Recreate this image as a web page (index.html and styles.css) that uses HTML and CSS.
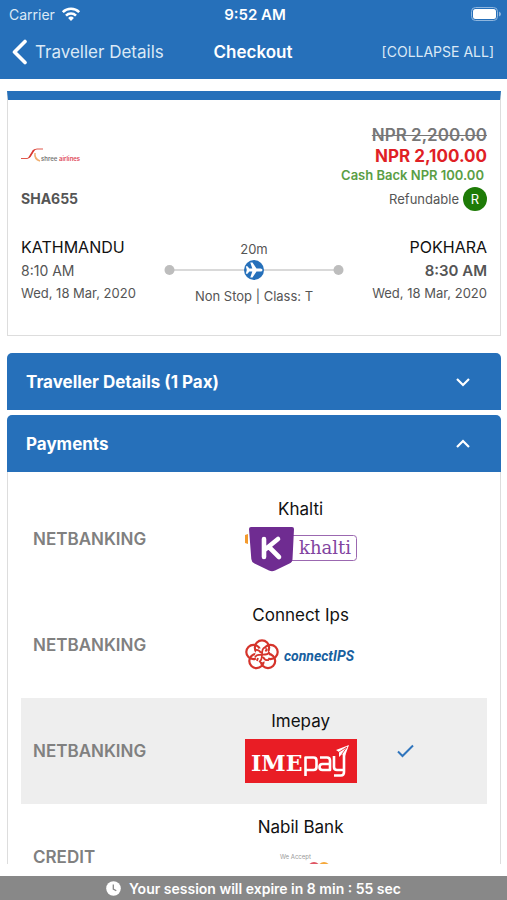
FILE: index.html
```html
<!DOCTYPE html>
<html lang="en">
<head>
  <meta charset="UTF-8">
  <meta name="viewport" content="width=device-width, initial-scale=1">
  <title>Checkout</title>
  <link rel="stylesheet" href="styles.css">
</head>
<body>

  <header>
    <!-- Status bar -->
    <div class="status-bar">
      <span class="carrier">Carrier
        <svg width="20" height="16" viewBox="0 0 20 16" fill="none" stroke="#fff" stroke-width="2.6">
          <path d="M1.8 6.2a11.6 11.6 0 0 1 16.4 0"/>
          <path d="M5 9.6a7.1 7.1 0 0 1 10 0"/>
          <path d="M10 15l-2.9-3.1a4.2 4.2 0 0 1 5.8 0z" fill="#fff" stroke="none"/>
        </svg>
      </span>
      <span class="time">9:52 AM</span>
      <svg class="battery" width="30" height="14" viewBox="0 0 30 14">
        <rect x="0.5" y="0.5" width="26" height="13" rx="4" fill="none" stroke="#8fb6de"/>
        <rect x="2" y="2" width="23" height="10" rx="2.5" fill="#fff"/>
        <path d="M28 4.5v5q2-1 2-2.5t-2-2.5z" fill="#8fb6de"/>
      </svg>
    </div>

    <!-- Navigation -->
    <nav>
      <a class="back" href="#">
        <svg width="16" height="26" viewBox="0 0 16 26" fill="none" stroke="#fff" stroke-width="3.6" stroke-linecap="round" stroke-linejoin="round"><path d="M13 2.5L2.5 13L13 23.5"/></svg>
        Traveller Details
      </a>
      <h1>Checkout</h1>
      <button class="collapse" type="button">[COLLAPSE ALL]</button>
    </nav>
  </header>

  <main>
    <!-- Flight -->
    <section class="flight">
      <div class="summary">
        <div class="airline">
          <svg width="62" height="20" viewBox="0 0 62 20">
            <path d="M0 13.5h6q2 0 3-2l3-5q1.500-2.500 4-2.500h6" fill="none" stroke="#e0584c" stroke-width="1"/>
            <path d="M7 13l4.500-7.500q1-1.500 3-1.500l-5 8q-.7 1-2.500 1z" fill="#d93a32"/>
            <path d="M14 8q-1 6 5 8" fill="none" stroke="#f0b070" stroke-width="1.5"/>
            <text x="20" y="16" fill="#777">shree</text>
            <text x="38" y="16" fill="#e04858">airlines</text>
          </svg>
          <strong>SHA655</strong>
        </div>
        <div class="price">
          <del>NPR 2,200.00</del>
          <strong class="now">NPR 2,100.00</strong>
          <strong class="cashback">Cash Back NPR 100.00</strong>
          <span class="refund">Refundable <b>R</b></span>
        </div>
      </div>

      <div class="route">
        <div class="stop">
          <h2>KATHMANDU</h2>
          <span class="hour">8:10 AM</span>
          <span class="date">Wed, 18 Mar, 2020</span>
        </div>
        <div class="leg">
          <span>20m</span>
          <svg width="180" height="22" viewBox="0 0 180 22">
            <path d="M5 11h170" stroke="#ccc" stroke-width="1.5"/>
            <circle cx="5.5" cy="11" r="5" fill="#bdbdbd"/>
            <circle cx="174.5" cy="11" r="5" fill="#bdbdbd"/>
            <circle cx="90" cy="11" r="10" fill="#2670ba"/>
            <path d="M98.500 11q0-1.600-2-1.600h-4L88.500 3.500h-2.200l2 5.900h-3L83.500 7.200H81.800l1 3.800-1 3.800h1.700l1.800-2.200h3l-2 5.900h2.200l4-5.900h4q2 0 2-1.600z" fill="#fff"/>
          </svg>
          <span class="class">Non Stop | Class: T</span>
        </div>
        <div class="stop arrive">
          <h2>POKHARA</h2>
          <span class="hour">8:30 AM</span>
          <span class="date">Wed, 18 Mar, 2020</span>
        </div>
      </div>
    </section>

    <!-- Accordions -->
    <button class="bar" type="button" aria-expanded="false">
      Traveller Details (1 Pax)
      <svg width="14" height="10" viewBox="0 0 14 10" fill="none" stroke="#fff" stroke-width="2.2"><path d="M1 2l6 6 6-6"/></svg>
    </button>
    <button class="bar" type="button" aria-expanded="true">
      Payments
      <svg width="14" height="10" viewBox="0 0 14 10" fill="none" stroke="#fff" stroke-width="2.2"><path d="M1 8l6-6 6 6"/></svg>
    </button>

    <div class="payments">
      <label class="method">
        <input type="radio" name="method" value="khalti">
        <span class="type">NETBANKING</span>
        <span class="brand">Khalti
          <svg width="114" height="46" viewBox="0 0 114 46">
            <path d="M1 9l3-1v10l-3-1z" fill="#f39a2d"/>
            <rect x="40" y="9.5" width="72.500" height="25" rx="3" fill="#fff" stroke="#9b68b0"/>
            <path d="M7 1h41q2 0 2 2l-1.500 30q0 3-3 4.500L31 44.500q-3 1.500-6 0L10.500 37.500q-3-1.500-3.200-4.500L5 3q0-2 2-2z" fill="#6f2c91"/>
            <path d="M20 13v18M34 13L20.500 24M25 21l10 10" fill="none" stroke="#fff" stroke-width="4.6" stroke-linecap="round"/>
            <text class="khalti-text" x="55" y="28">khalti</text>
          </svg>
        </span>
      </label>

      <label class="method">
        <input type="radio" name="method" value="connectips">
        <span class="type">NETBANKING</span>
        <span class="brand">Connect Ips
          <svg width="114" height="46" viewBox="0 0 114 46">
            <g fill="none" stroke="#d5342b" stroke-width="2.2">
              <circle cx="18" cy="15.5" r="7.2"/>
              <circle cx="26.500" cy="20" r="7.2"/>
              <circle cx="24" cy="29" r="7.2"/>
              <circle cx="12.500" cy="29" r="7.2"/>
              <circle cx="9.500" cy="20" r="7.2"/>
            </g>
            <circle cx="18" cy="23" r="7" fill="#fff"/>
            <path d="M20.500 15.500q-2.500 1-2.500 7t-3 7.500M11 25.500q1-3 7-2.800t7.500-2.700M11 18q4-1 6 3M19 25q2 4 6 3M23 16.500l-1.500 3M13 29l1-3" fill="none" stroke="#d5342b" stroke-width="1.8"/>
            <text class="ips-text" x="40" y="29">connectIPS</text>
          </svg>
        </span>
      </label>

      <label class="method">
        <input type="radio" name="method" value="imepay" checked>
        <span class="type">NETBANKING</span>
        <span class="brand">Imepay
          <svg width="114" height="46" viewBox="0 0 114 46">
            <path d="M1 1h112v44H1z" fill="#e91d25"/>
            <text class="ime-text" x="7" y="33">IME</text>
            <g fill="none" stroke="#fff" stroke-width="2.6" stroke-linejoin="round">
              <path d="M61.500 38V19.500h8q3 0 3 3v6.500q0 3-3 3h-8"/>
              <path d="M76 19.500h7q3 0 3 3V32h-7.500q-3 0-3-3t3-3H86"/>
              <path d="M90 18v11q0 3 3 3h7M100 16v18q0 3.500-3 3.500h-7"/>
            </g>
            <path d="M92 12l13-5-4 11-3-2-3 3v-5z" fill="#fff"/>
            <path d="M95 14l8-5-5 7" fill="none" stroke="#e91d25" stroke-width=".8"/>
          </svg>
        </span>
        <svg class="tick" width="17" height="14" viewBox="0 0 17 14" fill="none" stroke="#2f75bd" stroke-width="2"><path d="M1 7.5l4.500 4.500L16 1.500"/></svg>
      </label>

      <label class="method">
        <input type="radio" name="method" value="nabil">
        <span class="type">CREDIT</span>
        <span class="brand">Nabil Bank
          <svg width="114" height="46" viewBox="0 0 114 46">
            <text class="accept-text" x="36" y="15">We Accept</text>
            <circle cx="70" cy="24" r="6" fill="#df5563"/>
            <circle cx="80" cy="24" r="6" fill="#f5a83a"/>
          </svg>
        </span>
      </label>
    </div>
  </main>

  <footer>
    <svg width="15" height="15" viewBox="0 0 15 15"><circle cx="7.5" cy="7.5" r="7.3" fill="#fff"/><path d="M7.300 3.500v4.500l3 1.700" fill="none" stroke="#888" stroke-width="1.3"/></svg>
    Your session will expire in 8 min : 55 sec
  </footer>

</body>
</html>
```

FILE: styles.css
```css
* {
  box-sizing: border-box;
}

body {
  margin: 0;
  height: 100vh;
  display: flex;
  flex-direction: column;
  background-color: #fff;
  color: #555;
  font-family: Inter, "Liberation Sans", sans-serif;
  font-size: 13px;
}

h1, h2 {
  margin: 0;
}

svg {
  display: block;
  flex: none;
}

button {
  border: none;
  font-family: inherit;
  color: #fff;
  cursor: pointer;
}

header {
  flex: none;
  background-color: #2670ba;
  color: #fff;
}

.status-bar, nav {
  display: grid;
  grid-template-columns: 1fr auto 1fr;
  align-items: center;
}

.status-bar {
  height: 28px;
  padding: 0 6px 0 9px;
  font-size: 14px;
}

.carrier {
  display: flex;
  align-items: center;
  gap: 6px;
  color: #dbe9f6;
}

.time {
  font-size: 15px;
  font-weight: 600;
}

.battery {
  justify-self: end;
}

nav {
  height: 51px;
  padding: 0 13px 4px 12px;
}

.back {
  display: flex;
  align-items: center;
  gap: 7px;
  color: #dbe9f6;
  font-size: 17px;
  text-decoration: none;
  white-space: nowrap;
}

h1 {
  font-size: 17px;
  font-weight: 600;
}

.collapse {
  justify-self: end;
  padding: 0;
  background: none;
  color: #dbe9f6;
  font-size: 14px;
}

main {
  flex: 1;
  min-height: 0;
  overflow: hidden;
  padding: 12px 6px 0 7px;
}

/* Flight card */
.flight {
  margin-bottom: 17px;
  padding: 25px 13px 29px;
  border: 1px solid #ddd;
  border-top: 9px solid #2670ba;
}

.summary {
  display: flex;
  justify-content: space-between;
}

.airline {
  display: flex;
  flex-direction: column;
  justify-content: space-between;
  padding: 20px 0 4px;
  font-size: 14px;
}

.airline text {
  font-size: 6px;
  font-weight: 600;
}

.price {
  display: flex;
  flex-direction: column;
  align-items: flex-end;
  line-height: 21px;
  font-size: 17px;
}

.price del {
  color: #777;
  font-weight: 600;
}

.now {
  color: #e01f26;
  font-weight: 700;
}

.cashback {
  padding-right: 3px;
  color: #5a9e45;
  font-size: 13px;
  font-weight: 600;
  line-height: 16px;
}

.refund {
  display: flex;
  align-items: center;
  gap: 4px;
  margin-top: 4px;
  font-size: 13px;
}

.refund b {
  width: 24px;
  border-radius: 50%;
  background-color: #1e7b07;
  color: #fff;
  font-weight: 400;
  line-height: 24px;
  text-align: center;
}

.route {
  display: grid;
  grid-template-columns: 1fr auto 1fr;
  margin-top: 24px;
  line-height: 20px;
}

.stop {
  display: flex;
  flex-direction: column;
}

.stop h2 {
  color: #111;
  font-size: 16px;
  font-weight: 400;
  line-height: 24px;
}

.hour {
  font-size: 14px;
  line-height: 24px;
}

.date {
  white-space: nowrap;
}

.arrive {
  align-items: flex-end;
}

.arrive .hour {
  font-size: 15px;
  font-weight: 600;
}

.leg {
  display: flex;
  flex-direction: column;
  align-items: center;
  padding-top: 4px;
}

.leg .class {
  margin-top: 5px;
}

/* Accordion bars */
.bar {
  display: flex;
  align-items: center;
  justify-content: space-between;
  width: 100%;
  height: 57px;
  margin-bottom: 5px;
  padding: 0 31px 0 19px;
  border-radius: 5px 5px 0 0;
  background-color: #2670ba;
  font-size: 17px;
  font-weight: 700;
}

.bar[aria-expanded="true"] {
  margin-bottom: 0;
}

.payments {
  padding: 14px 13px 0;
  border: 1px solid #ddd;
  border-top: none;
}

.method {
  display: grid;
  grid-template-columns: 2fr 2fr 1fr;
  align-items: center;
  height: 106px;
  cursor: pointer;
}

.method input {
  position: absolute;
  opacity: 0;
}

.method:has(input:checked) {
  background-color: #eee;
}

.type {
  padding-left: 12px;
  color: #808080;
  font-size: 17px;
  font-weight: 600;
}

.brand {
  display: flex;
  flex-direction: column;
  align-items: center;
  gap: 5px;
  padding-bottom: 9px;
  color: #111;
  font-size: 17px;
  line-height: 24px;
}

.tick {
  margin-left: 3px;
}

.khalti-text {
  fill: #8244a0;
  font-family: "DejaVu Serif", serif;
  font-size: 18px;
}

.ips-text {
  fill: #17609f;
  font-family: "Liberation Sans Narrow", Roboto, sans-serif;
  font-size: 14px;
  font-style: italic;
  font-weight: 700;
}

.ime-text {
  fill: #fff;
  font-family: "DejaVu Serif", serif;
  font-size: 22px;
  font-weight: 700;
}

.accept-text {
  fill: #999;
  font-size: 6px;
}

footer {
  flex: none;
  display: flex;
  align-items: center;
  justify-content: center;
  gap: 8px;
  height: 24px;
  margin-top: 12px;
  background-color: #888;
  color: #fff;
  font-size: 14px;
  font-weight: 600;
}
```
